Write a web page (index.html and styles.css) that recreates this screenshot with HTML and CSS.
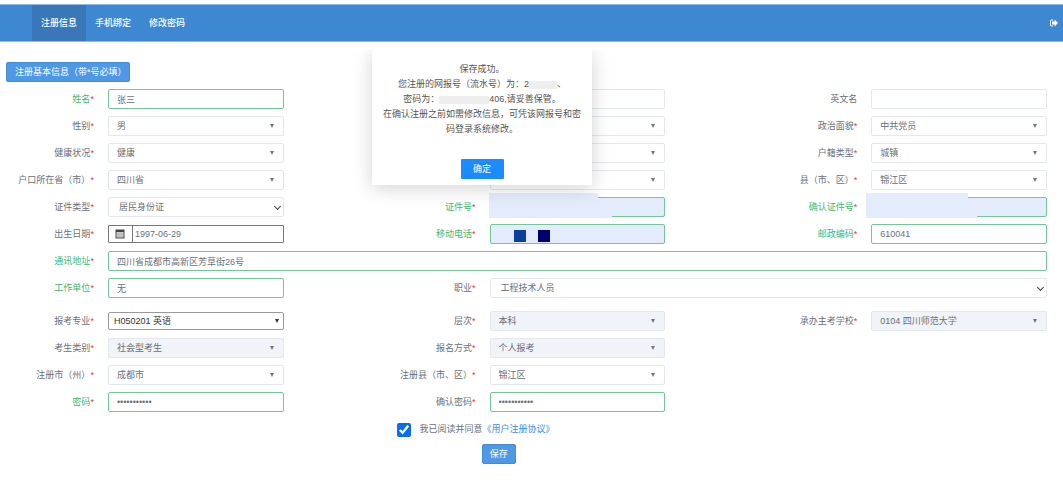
FILE: index.html
```html
<!DOCTYPE html>
<html>
<head>
  <meta charset="utf-8">
  <title>注册信息</title>
  <link rel="stylesheet" href="styles.css">
</head>
<body>
  <nav class="navbar">
    <a class="nav-link active" href="#">注册信息</a>
    <a class="nav-link" href="#">手机绑定</a>
    <a class="nav-link" href="#">修改密码</a>
    <a class="logout" href="#" aria-label="退出">
      <svg width="8" height="8" viewBox="0 0 16 16">
        <path d="M6 2H3Q1 2 1 4v8q0 2 2 2h3" fill="none" stroke="#fff" stroke-width="2" />
        <path d="M4 5h5V1l7 7-7 7v-4H4z" fill="#fff" />
      </svg>
    </a>
  </nav>

  <form class="form">
    <h1 class="form-title">注册基本信息（带*号必填）</h1>

    <div class="fields">
      <label class="label first valid" for="name">姓名<i>*</i></label>
      <input class="control valid" id="name" type="text" value="张三">
      <span></span>
      <input class="control" type="text" aria-label="曾用名">
      <label class="label" for="enName">英文名</label>
      <input class="control" id="enName" type="text">

      <label class="label first" for="sex">性别<i>*</i></label>
      <div class="select"><select class="control" id="sex"><option>男</option></select></div>
      <span></span>
      <div class="select"><select class="control" aria-label="民族"><option></option></select></div>
      <label class="label" for="politics">政治面貌<i>*</i></label>
      <div class="select"><select class="control" id="politics"><option>中共党员</option></select></div>

      <label class="label first" for="health">健康状况<i>*</i></label>
      <div class="select"><select class="control" id="health"><option>健康</option></select></div>
      <span></span>
      <div class="select"><select class="control" aria-label="文化程度"><option></option></select></div>
      <label class="label" for="household">户籍类型<i>*</i></label>
      <div class="select"><select class="control" id="household"><option>城镇</option></select></div>

      <label class="label first" for="province">户口所在省（市）<i>*</i></label>
      <div class="select"><select class="control" id="province"><option>四川省</option></select></div>
      <span></span>
      <div class="select"><select class="control" aria-label="市（州）"><option></option></select></div>
      <label class="label" for="county">县（市、区）<i>*</i></label>
      <div class="select"><select class="control" id="county"><option>锦江区</option></select></div>

      <label class="label first" for="idType">证件类型<i>*</i></label>
      <div class="select chevron"><select class="control" id="idType"><option>居民身份证</option></select></div>
      <label class="label valid" for="idNo">证件号<i>*</i></label>
      <div class="masked">
        <input class="control valid filled" id="idNo" type="text">
        <span class="mask mask-top"></span>
        <span class="mask mask-bottom"></span>
      </div>
      <label class="label valid" for="idNo2">确认证件号<i>*</i></label>
      <div class="masked">
        <input class="control valid filled" id="idNo2" type="text">
        <span class="mask mask-top wide-left"></span>
        <span class="mask mask-bottom wide-left"></span>
      </div>

      <label class="label first" for="birthday">出生日期<i>*</i></label>
      <div class="date-group">
        <span class="date-icon">
          <svg width="10" height="10" viewBox="0 0 10 10">
            <rect x="1" y="1" width="8" height="8" fill="#ddd" stroke="#444" />
            <path d="M1 2h8" stroke="#444" stroke-width="2" />
            <path d="M1 5h8M1 7h8M3 3v6M5 3v6M7 3v6" stroke="#999" stroke-width=".5" />
          </svg>
        </span>
        <input class="date-input" id="birthday" type="text" value="1997-06-29">
      </div>
      <label class="label valid" for="mobile">移动电话<i>*</i></label>
      <div class="masked">
        <input class="control valid filled" id="mobile" type="text">
        <span class="block blue"></span>
        <span class="block navy"></span>
      </div>
      <label class="label valid" for="zip">邮政编码<i>*</i></label>
      <input class="control valid" id="zip" type="text" value="610041">

      <label class="label first valid" for="address">通讯地址<i>*</i></label>
      <input class="control valid span-five" id="address" type="text" value="四川省成都市高新区芳草街26号">

      <label class="label first valid" for="company">工作单位<i>*</i></label>
      <input class="control valid" id="company" type="text" value="无">
      <label class="label" for="job">职业<i>*</i></label>
      <div class="select chevron span-three"><select class="control" id="job"><option>工程技术人员</option></select></div>
    </div>

    <div class="fields">
      <label class="label first" for="major">报考专业<i>*</i></label>
      <div class="select major"><select class="control" id="major"><option>H050201 英语</option></select></div>
      <label class="label" for="level">层次<i>*</i></label>
      <div class="select"><select class="control" id="level" disabled><option>本科</option></select></div>
      <label class="label" for="school">承办主考学校<i>*</i></label>
      <div class="select"><select class="control" id="school" disabled><option>0104 四川师范大学</option></select></div>

      <label class="label first" for="category">考生类别<i>*</i></label>
      <div class="select"><select class="control" id="category" disabled><option>社会型考生</option></select></div>
      <label class="label" for="way">报名方式<i>*</i></label>
      <div class="select"><select class="control" id="way" disabled><option>个人报考</option></select></div>

      <label class="label first" for="regCity">注册市（州）<i>*</i></label>
      <div class="select"><select class="control" id="regCity"><option>成都市</option></select></div>
      <label class="label" for="regCounty">注册县（市、区）<i>*</i></label>
      <div class="select"><select class="control" id="regCounty"><option>锦江区</option></select></div>

      <label class="label first valid" for="pwd">密码<i>*</i></label>
      <input class="control valid" id="pwd" type="password" value="12345678901">
      <label class="label" for="pwd2">确认密码<i>*</i></label>
      <input class="control valid" id="pwd2" type="password" value="12345678901">
    </div>

    <div class="agree">
      <input class="agree-box" id="agree" type="checkbox" checked>
      <label for="agree">我已阅读并同意</label>
      <a href="#">《用户注册协议》</a>
    </div>
    <div class="actions">
      <button class="btn-save" type="button">保存</button>
    </div>
  </form>

  <div class="dialog" role="dialog">
    <p>保存成功。</p>
    <p>您注册的网报号（流水号）为：2<span class="smudge"></span>、</p>
    <p>密码为：<span class="smudge wide"></span>406,请妥善保管。</p>
    <p>在确认注册之前如需修改信息，可凭该网报号和密码登录系统修改。</p>
    <button class="btn-ok" type="button">确定</button>
  </div>
</body>
</html>
```
FILE: styles.css
```css
* {
  box-sizing: border-box;
}

body {
  margin: 0;
  padding-top: 4px;
  position: relative;
  background: #fff;
  color: #6b7079;
  font-family: "Liberation Sans", "Noto Sans CJK SC", sans-serif;
  font-size: 9px;
  line-height: 15px;
}

input,
select,
button {
  font: inherit;
  color: inherit;
}

a {
  text-decoration: none;
}

/* top bar */
.navbar {
  display: flex;
  height: 38px;
  padding: 0 5px 0 32px;
  background: #3e88d2;
  border-top: 1px solid #8dbbe8;
  border-bottom: 1px solid #8dbbe8;
}

.nav-link {
  display: flex;
  align-items: center;
  padding: 0 9px;
  color: #fff;
  font-weight: 500;
}

.nav-link.active {
  background: #3977b8;
}

.logout {
  display: flex;
  align-items: center;
  margin-left: auto;
}

/* form */
.form {
  padding: 20px 16px 30px 8px;
}

.form-title {
  display: inline-block;
  margin: 0 0 0 -2px;
  padding: 0 2px 0 8px;
  background: #4f98e3;
  border: 1px solid #448bd6;
  border-radius: 2px;
  color: #fff;
  font-size: 9px;
  font-weight: 400;
  line-height: 18px;
  vertical-align: top;
}

.fields {
  display: grid;
  grid-template-columns: 100fr 176fr 206fr 176fr 206fr 176fr;
  grid-auto-rows: 20px;
  row-gap: 7px;
  align-items: center;
  margin-top: 7px;
}

.fields + .fields {
  margin-top: 13px;
}

.label {
  padding-right: 14px;
  text-align: right;
  white-space: nowrap;
}

.label.first {
  grid-column: 1;
}

.label.valid {
  color: #3fb671;
}

.label i {
  color: #e03c3c;
  font-style: normal;
}

.control {
  display: block;
  width: 100%;
  min-width: 0;
  height: 20px;
  margin: 0;
  padding: 0 8px;
  appearance: none;
  background: #fff;
  border: 1px solid #e4e8ec;
  border-radius: 2px;
  outline: none;
}

.control.valid {
  border-color: #74c69a;
}

.control.filled {
  background: #e4ecfc;
}

.control:disabled {
  background: #f0f3f7;
  color: #6b7079;
  opacity: 1;
}

.span-three {
  grid-column: span 3;
}

.span-five {
  grid-column: span 5;
}

.select,
.masked {
  position: relative;
}

.select::after {
  content: "";
  position: absolute;
  top: 8px;
  right: 10px;
  border: 2px solid transparent;
  border-top: 4px solid #777;
  border-bottom: 0;
  pointer-events: none;
}

.select.chevron::after {
  top: 7px;
  right: 4px;
  width: 4px;
  height: 4px;
  border: solid #444;
  border-width: 0 1px 1px 0;
  transform: rotate(45deg);
}

.chevron .control {
  padding-left: 10px;
}

.major .control {
  height: 18px;
  padding-left: 5px;
  border-color: #999;
  color: #333;
}

.select.major::after {
  top: 7px;
  right: 5px;
  border-top-color: #333;
}

.date-group {
  display: flex;
  height: 18px;
  border: 1px solid #777;
  border-radius: 1px;
}

.date-icon {
  display: flex;
  align-items: center;
  justify-content: center;
  width: 24px;
  border-right: 1px solid #777;
}

.date-input {
  flex: 1;
  min-width: 0;
  padding: 0 2px;
  border: 0;
  outline: none;
}

/* covers over private numbers */
.mask {
  position: absolute;
  left: -1px;
  background: #e4ecfc;
}

.mask-top {
  top: -4px;
  width: 62%;
  height: 12px;
}

.mask-bottom {
  bottom: -1px;
  width: 70%;
  height: 15px;
}

.mask.wide-left {
  left: -5px;
  width: 58%;
}

.mask-bottom.wide-left {
  width: 63%;
}

.block {
  position: absolute;
  top: 6px;
  left: 24px;
  width: 12px;
  height: 12px;
  background: #0a3f9e;
}

.block.navy {
  left: 48px;
  background: #00006e;
}

.agree {
  display: flex;
  align-items: center;
  margin-top: 10px;
  padding-left: 37.4%;
}

.agree-box {
  width: 14px;
  height: 14px;
  margin: 0 9px 0 0;
  accent-color: #0b6cf0;
}

.agree a {
  color: #3d8bea;
}

.actions {
  margin-top: 7px;
  padding-left: 45.6%;
}

.btn-save {
  display: block;
  width: 34px;
  height: 20px;
  padding: 0;
  background: #4f98e3;
  border: 1px solid #448bd6;
  border-radius: 2px;
  color: #fff;
}

/* dialog */
.dialog {
  position: absolute;
  top: 50px;
  left: 35%;
  width: 220px;
  padding: 12px 10px 6px;
  background: #fff;
  box-shadow: 0 3px 18px rgba(0, 0, 0, .18);
  clip-path: inset(0 -20px -22px -20px);
  color: #555;
  text-align: center;
}

.dialog p {
  margin: 0;
}

.smudge {
  display: inline-block;
  width: 28px;
  height: 8px;
  background: #eee;
  vertical-align: middle;
}

.smudge.wide {
  width: 50px;
}

.btn-ok {
  width: 43px;
  height: 20px;
  margin-top: 22px;
  padding: 0;
  background: #1a8cff;
  border: 0;
  border-radius: 1px;
  color: #fff;
}
```
